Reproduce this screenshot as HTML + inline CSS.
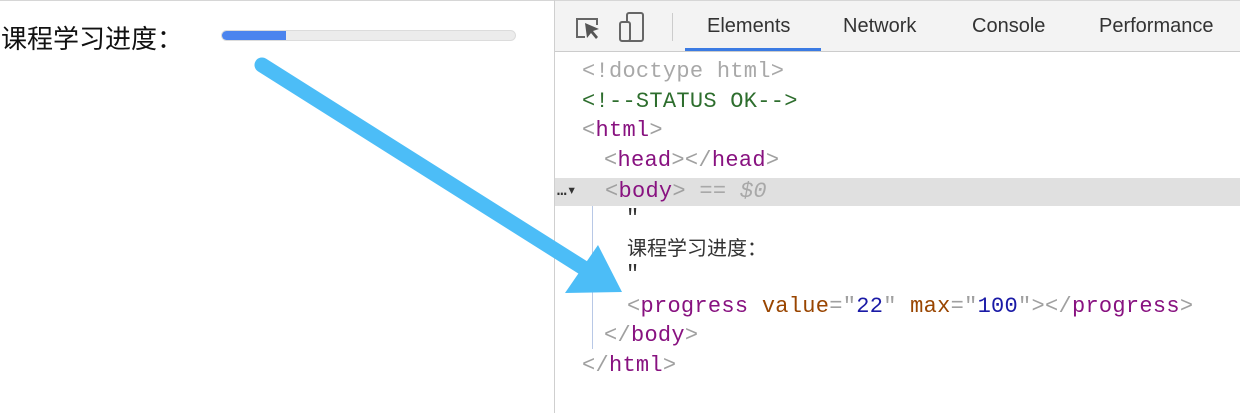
<!DOCTYPE html>
<html><head><meta charset="utf-8"><style>
html,body{margin:0;padding:0;background:#fff;}
body{width:1240px;height:413px;position:relative;overflow:hidden;font-family:"Liberation Sans","Noto Sans CJK SC",sans-serif;}
.topline{position:absolute;left:0;top:0;width:1240px;height:1px;background:#d6d6d6}
.lbl{position:absolute;left:1px;top:21px;font-size:26px;color:#111;line-height:34px;font-family:"Noto Sans CJK SC",sans-serif}
.bar{position:absolute;left:221px;top:30px;width:295px;height:11px;border-radius:6px;background:#ececec;border:1px solid #dcdcdc;box-sizing:border-box;overflow:hidden}
.bar div{width:64px;height:100%;background:#4b84ee}
.div{position:absolute;left:554px;top:0;width:1px;height:413px;background:#cfcfcf}
.hdr{position:absolute;left:555px;top:1px;width:685px;height:50px;background:#f3f3f3;border-bottom:1px solid #cccccc}
.tab{position:absolute;top:15px;font-size:20px;color:#333}
.ul{position:absolute;left:685px;top:48px;width:136px;height:3px;background:#3b7be3}
.code{position:absolute;left:0;top:0;font-family:"Liberation Mono","Noto Sans CJK SC",monospace;font-size:22px;letter-spacing:0.28px;white-space:pre}
.ln{position:absolute;height:29px;line-height:29px}
.hl{position:absolute;left:555px;top:178px;width:685px;height:28px;background:#e0e0e0}
.g{color:#a8a8a8}.gr{color:#2e6e2e}.t{color:#881280}.p{color:#a0a0a0}.a{color:#994500}.v{color:#1a1aa6}.k{color:#333}
.vline{position:absolute;left:592px;top:206px;width:1px;height:143px;background:#b8c8e6}
</style></head><body>
<div class="topline"></div>
<div class="lbl">课程学习进度：</div>
<div class="bar"><div></div></div>
<div class="div"></div>
<div class="hdr">
<svg style="position:absolute;left:18px;top:12px" width="30" height="30" viewBox="0 0 30 30"><path d="M12 24H4V6h20v6" fill="none" stroke="#666" stroke-width="2"/><path d="M12 10l14 6-6 2 5 6-2 2-5-6-4 5z" fill="#555"/></svg>
<svg style="position:absolute;left:62px;top:10px" width="30" height="32" viewBox="0 0 30 32"><rect x="10" y="2" width="16" height="28" rx="2" fill="none" stroke="#666" stroke-width="2"/><rect x="3" y="11" width="10" height="19" rx="2" fill="#f3f3f3" stroke="#666" stroke-width="2"/></svg>
<div style="position:absolute;left:117px;top:12px;width:1px;height:28px;background:#ccc"></div>
</div>
<div class="tab" style="left:707px">Elements</div>
<div class="tab" style="left:843px">Network</div>
<div class="tab" style="left:972px">Console</div>
<div class="tab" style="left:1099px">Performance</div>
<div class="ul"></div>
<div class="hl"></div>
<div class="vline"></div>
<div class="code">
<div class="ln g" style="left:582px;top:57px">&lt;!doctype html&gt;</div>
<div class="ln gr" style="left:582px;top:87px">&lt;!--STATUS OK--&gt;</div>
<div class="ln" style="left:582px;top:116px"><span class="p">&lt;</span><span class="t">html</span><span class="p">&gt;</span></div>
<div class="ln" style="left:604px;top:146px"><span class="p">&lt;</span><span class="t">head</span><span class="p">&gt;&lt;/</span><span class="t">head</span><span class="p">&gt;</span></div>
<div class="ln k" style="left:557px;top:177px;font-size:16px;font-weight:bold">…▾</div>
<div class="ln" style="left:605px;top:177px"><span class="p">&lt;</span><span class="t">body</span><span class="p">&gt;</span> <span class="g">== <i>$0</i></span></div>
<div class="ln k" style="left:626px;top:204px">"</div>
<div class="ln k" style="left:627px;top:232px;font-family:'Noto Sans CJK SC',sans-serif;font-size:20px;letter-spacing:0">课程学习进度：</div>
<div class="ln k" style="left:626px;top:260px">"</div>
<div class="ln" style="left:627px;top:292px"><span class="p">&lt;</span><span class="t">progress</span> <span class="a">value</span><span class="p">="</span><span class="v">22</span><span class="p">"</span> <span class="a">max</span><span class="p">="</span><span class="v">100</span><span class="p">"&gt;&lt;/</span><span class="t">progress</span><span class="p">&gt;</span></div>
<div class="ln" style="left:604px;top:321px"><span class="p">&lt;/</span><span class="t">body</span><span class="p">&gt;</span></div>
<div class="ln" style="left:582px;top:351px"><span class="p">&lt;/</span><span class="t">html</span><span class="p">&gt;</span></div>
</div>
<svg style="position:absolute;left:0;top:0" width="1240" height="413"><path d="M262 65 L590 272" stroke="#4cbdf7" stroke-width="15" stroke-linecap="round" fill="none"/><path d="M598 245 L622 292 L565 293 Z" fill="#4cbdf7"/></svg>
</body></html>
